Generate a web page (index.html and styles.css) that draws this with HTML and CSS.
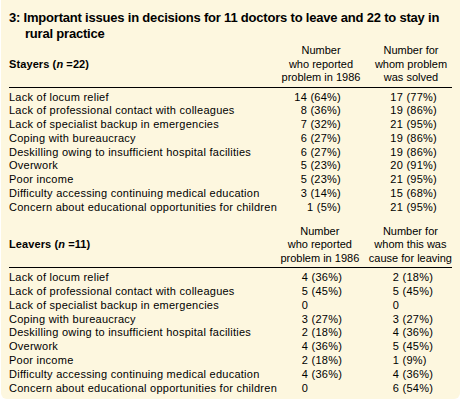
FILE: index.html
```html
<!DOCTYPE html>
<html lang="en">
<head>
    <meta charset="UTF-8">
    <title>Table 3</title>
    <link rel="stylesheet" href="styles.css">
</head>
<body>
  <div class="box">
    <h1>3: Important issues in decisions for 11 doctors to leave and 22 to stay in rural practice</h1>

    <table class="issues stayers">
      <thead>
        <tr>
          <th class="group">Stayers (<i>n</i> =22)</th>
          <th class="num">Number<br>who reported<br>problem in 1986</th>
          <th class="num last">Number for<br>whom problem<br>was solved</th>
        </tr>
      </thead>
      <tbody>
        <tr><td>Lack of locum relief</td><td>14 (64%)</td><td>17 (77%)</td></tr>
        <tr><td>Lack of professional contact with colleagues</td><td>8 (36%)</td><td>19 (86%)</td></tr>
        <tr><td>Lack of specialist backup in emergencies</td><td>7 (32%)</td><td>21 (95%)</td></tr>
        <tr><td>Coping with bureaucracy</td><td>6 (27%)</td><td>19 (86%)</td></tr>
        <tr><td>Deskilling owing to insufficient hospital facilities</td><td>6 (27%)</td><td>19 (86%)</td></tr>
        <tr><td>Overwork</td><td>5 (23%)</td><td>20 (91%)</td></tr>
        <tr><td>Poor income</td><td>5 (23%)</td><td>21 (95%)</td></tr>
        <tr><td>Difficulty accessing continuing medical education</td><td>3 (14%)</td><td>15 (68%)</td></tr>
        <tr><td>Concern about educational opportunities for children</td><td>1 (5%)</td><td>21 (95%)</td></tr>
      </tbody>
    </table>

    <table class="issues leavers">
      <thead>
        <tr>
          <th class="group">Leavers (<i>n</i> =11)</th>
          <th class="num">Number<br>who reported<br>problem in 1986</th>
          <th class="num last">Number for<br>whom this was<br>cause for leaving</th>
        </tr>
      </thead>
      <tbody>
        <tr><td>Lack of locum relief</td><td>4 (36%)</td><td>2 (18%)</td></tr>
        <tr><td>Lack of professional contact with colleagues</td><td>5 (45%)</td><td>5 (45%)</td></tr>
        <tr><td>Lack of specialist backup in emergencies</td><td>0</td><td>0</td></tr>
        <tr><td>Coping with bureaucracy</td><td>3 (27%)</td><td>3 (27%)</td></tr>
        <tr><td>Deskilling owing to insufficient hospital facilities</td><td>2 (18%)</td><td>4 (36%)</td></tr>
        <tr><td>Overwork</td><td>4 (36%)</td><td>5 (45%)</td></tr>
        <tr><td>Poor income</td><td>2 (18%)</td><td>1 (9%)</td></tr>
        <tr><td>Difficulty accessing continuing medical education</td><td>4 (36%)</td><td>4 (36%)</td></tr>
        <tr><td>Concern about educational opportunities for children</td><td>0</td><td>6 (54%)</td></tr>
      </tbody>
    </table>
  </div>
</body>
</html>
```

FILE: styles.css
```css
body {
    margin: 0;
    background-color: #fff;
    font-family: "Liberation Sans", Arial, sans-serif;
    color: #000;
}
.box {
    width: 459px;
    height: 399px;
    margin-left: 1px;
    padding: 10px 8px 0 8px;
    box-sizing: border-box;
    background-color: #fdf7df;
    border-radius: 0 0 6px 6px;
    overflow: hidden;
}
h1 {
    margin: 0 0 2px 0;
    padding-left: 16px;
    text-indent: -16px;
    font-size: 13px;
    line-height: 16px;
    font-weight: bold;
    letter-spacing: -0.2px;
}
.issues {
    width: 443px;
    border-collapse: collapse;
    font-size: 11px;
    line-height: 13.8px;
    letter-spacing: 0.25px;
}
.issues th {
    font-weight: normal;
    padding: 0 0 2px 0;
    line-height: 13.5px;
    border-bottom: 1px solid #000;
    vertical-align: middle;
    white-space: nowrap;
    letter-spacing: 0;
}
.issues th.group {
    text-align: left;
    font-weight: bold;
    letter-spacing: 0.1px;
}
.issues th.num {
    width: 82px;
    text-align: center;
}
.issues th.last {
    width: 82px;
    padding-left: 8px;
}
.issues td {
    padding: 0;
    white-space: nowrap;
}
.issues tbody tr:first-child td {
    padding-top: 3px;
}
.stayers td:nth-child(2) {
    text-align: right;
    padding-right: 21px;
}
.stayers td:nth-child(3) {
    text-align: right;
    padding-right: 15px;
}
.leavers {
    margin-top: 10px;
}
.leavers td:nth-child(2) {
    padding-left: 23px;
}
.leavers td:nth-child(3) {
    padding-left: 32px;
}
```
